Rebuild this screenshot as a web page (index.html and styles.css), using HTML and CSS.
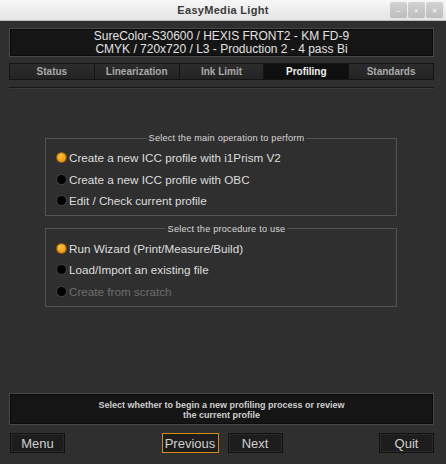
FILE: index.html
```html
<!DOCTYPE html>
<html lang="en">
<head>
    <meta charset="UTF-8">
    <title>EasyMedia Light</title>
    <link rel="stylesheet" href="styles.css">
</head>
<body>
    <!-- Barre de titre -->
    <div class="titlebar">
        <span class="title">EasyMedia Light</span>
        <div class="win-buttons">
            <span class="win-btn">&#8211;</span>
            <span class="win-btn">&#9642;</span>
            <span class="win-btn">&#215;</span>
        </div>
    </div>

    <div class="window">
        <div class="printer-box">
            <div>SureColor-S30600 / HEXIS FRONT2 - KM FD-9</div>
            <div>CMYK / 720x720 / L3 - Production 2 - 4 pass Bi</div>
        </div>

        <div class="tabs">
            <div class="tab">Status</div>
            <div class="tab">Linearization</div>
            <div class="tab">Ink Limit</div>
            <div class="tab active">Profiling</div>
            <div class="tab">Standards</div>
        </div>
        <div class="separator"></div>

        <!-- Operation principale -->
        <fieldset class="group group-main">
            <legend>Select the main operation to perform</legend>
            <div class="option"><span class="radio checked"></span>Create a new ICC profile with i1Prism V2</div>
            <div class="option"><span class="radio"></span>Create a new ICC profile with OBC</div>
            <div class="option"><span class="radio"></span>Edit / Check current profile</div>
        </fieldset>

        <!-- Procedure -->
        <fieldset class="group group-proc">
            <legend>Select the procedure to use</legend>
            <div class="option"><span class="radio checked"></span>Run Wizard (Print/Measure/Build)</div>
            <div class="option"><span class="radio"></span>Load/Import an existing file</div>
            <div class="option disabled"><span class="radio"></span>Create from scratch</div>
        </fieldset>

        <div class="status-box">
            Select whether to begin a new profiling process or review<br>
            the current profile
        </div>

        <div class="footer">
            <button class="btn">Menu</button>
            <div class="nav">
                <button class="btn focused">Previous</button>
                <button class="btn">Next</button>
            </div>
            <button class="btn">Quit</button>
        </div>
    </div>
</body>
</html>
```

FILE: styles.css
```css
html, body {
    margin: 0;
    padding: 0;
}
body {
    width: 446px;
    height: 464px;
    background: #2f2f2f;
    font-family: "Liberation Sans", Arial, sans-serif;
    color: #dcdcdc;
    display: flex;
    flex-direction: column;
    overflow: hidden;
}
/* Barre de titre */
.titlebar {
    height: 21px;
    flex: none;
    background: linear-gradient(#f7f7f7, #e4e4e4);
    border-bottom: 1px solid #bdbdbd;
    box-sizing: border-box;
    display: flex;
    align-items: center;
    justify-content: center;
    position: relative;
}
.title {
    font-size: 11px;
    font-weight: bold;
    color: #3a3a3a;
    letter-spacing: 0.3px;
}
.win-buttons {
    position: absolute;
    right: 3px;
    top: 2px;
    display: flex;
    gap: 1px;
}
.win-btn {
    width: 17px;
    height: 16px;
    background: linear-gradient(#d2d2d2, #bdbdbd);
    border-radius: 2px;
    color: #f4f4f4;
    font-size: 8px;
    font-weight: bold;
    display: flex;
    align-items: center;
    justify-content: center;
}
.window {
    flex: 1;
    display: flex;
    flex-direction: column;
    padding: 7px 12px 11px 9px;
}
.printer-box {
    height: 29px;
    box-sizing: border-box;
    background: #151515;
    border: 1px solid #474747;
    box-shadow: inset 0 0 0 1px #0b0b0b;
    text-align: center;
    font-size: 12px;
    line-height: 13px;
    padding-top: 1px;
    color: #e2e2e2;
}
.tabs {
    margin-top: 6px;
    height: 17px;
    display: flex;
    border: 1px solid #141414;
    box-sizing: border-box;
}
.tab {
    flex: 1;
    background: linear-gradient(#2c2c2c, #232323);
    border-right: 1px solid #141414;
    color: #a9a9a9;
    font-size: 10px;
    font-weight: bold;
    text-align: center;
    line-height: 15px;
}
.tab:last-child {
    border-right: none;
}
.tab.active {
    background: #0f0f0f;
    color: #f2f2f2;
}
.separator {
    margin-top: 7px;
    border-top: 1px solid #161616;
    border-bottom: 1px solid #3a3a3a;
}
.group {
    margin: 0 37px 0 36px;
    border: 1px solid #525252;
    padding: 0 0 0 11px;
}
.group-main {
    margin-top: 44px;
    padding-top: 4px;
    padding-bottom: 3px;
}
.group-proc {
    margin-top: 8px;
    padding-top: 4px;
    padding-bottom: 4px;
}
.group legend {
    margin: 0 auto;
    padding: 0 2px;
    font-size: 9.2px;
    line-height: 10px;
    color: #d8d8d8;
    letter-spacing: 0.2px;
}
.option {
    height: 21.5px;
    display: flex;
    align-items: center;
    font-size: 11.7px;
    color: #dedede;
}
.option.disabled {
    color: #6e6e6e;
}
.radio {
    width: 9px;
    height: 9px;
    border-radius: 50%;
    background: #000;
    box-shadow: 0 0 0 1px #3e3e3e;
    margin-right: 3px;
    flex: none;
}
.radio.checked {
    background: radial-gradient(circle at 40% 35%, #ffc040, #f39c0c 70%);
    box-shadow: 0 0 0 1px #8a5a08;
}
.status-box {
    margin-top: auto;
    height: 32px;
    box-sizing: border-box;
    background: #151515;
    border: 1px solid #474747;
    box-shadow: inset 0 0 0 1px #0b0b0b;
    text-align: center;
    font-size: 9px;
    font-weight: bold;
    line-height: 10px;
    padding-top: 6px;
    color: #cfcfcf;
}
.footer {
    margin-top: 8px;
    display: flex;
    justify-content: space-between;
    padding-left: 1px;
}
.nav {
    display: flex;
    gap: 9px;
}
.btn {
    width: 55px;
    height: 20px;
    padding: 0;
    background: #1d1d1d;
    border: 1px solid #111;
    box-shadow: inset 0 0 0 1px #2a2a2a;
    color: #cfcfcf;
    font-family: "Liberation Sans", Arial, sans-serif;
    font-size: 13px;
}
.btn.focused {
    width: 57px;
    border: 1px solid #d48d0b;
    box-shadow: none;
}
```
